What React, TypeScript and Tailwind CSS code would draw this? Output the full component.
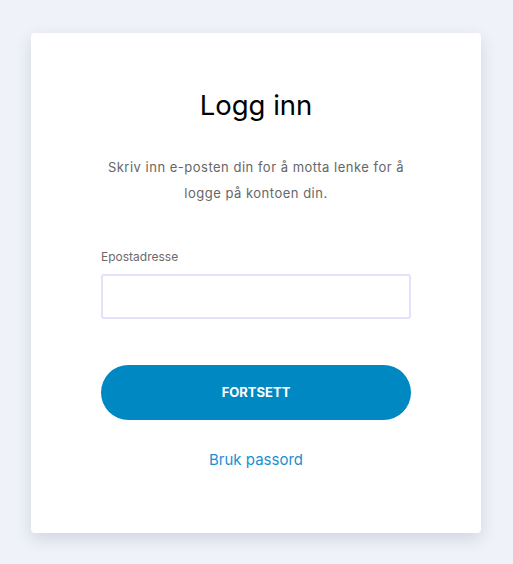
export default function App() {
  return (
    <div className="min-h-screen bg-[#eff2f8] pt-[33px] pl-[31px] font-['Inter','Lato',sans-serif]">
      <div className="w-[450px] h-[500px] bg-white rounded-[4px] shadow-[0_6px_16px_rgba(30,40,80,0.14)] px-[70px] pt-[52px]">
        <h1 className="text-center text-[27.5px] leading-[40px] text-black">Logg inn</h1>
        <p className="mt-[29px] px-[4px] text-center text-[13px] tracking-[0.5px] leading-[26px] text-[#666]">
          Skriv inn e-posten din for å motta lenke for å logge på kontoen din.
        </p>
        <label className="block mt-[43px] text-[12px] leading-[16px] text-[#6b6b6b]">Epostadresse</label>
        <input
          type="email"
          className="mt-[9px] block w-full h-[45px] rounded-[3px] border-2 border-[#e3e2fa] outline-none px-3"
        />
        <button className="mt-[46px] w-full h-[55px] rounded-full bg-[#0088c2] text-white text-[13px] font-bold">
          FORTSETT
        </button>
        <div className="mt-[27px] text-center">
          <a href="#" className="text-[15px] text-[#1b8fcf]">Bruk passord</a>
        </div>
      </div>
    </div>
  );
}
